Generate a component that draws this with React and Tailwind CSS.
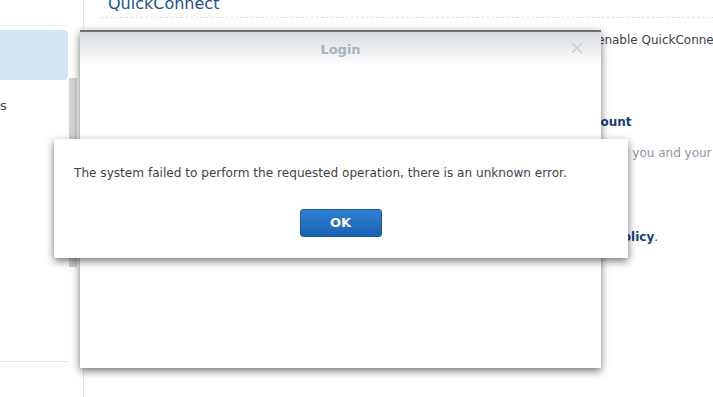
import React from "react";

export default function App() {
  const font = { fontFamily: '"DejaVu Sans", Verdana, sans-serif' };
  return (
    <div
      className="relative w-[713px] h-[397px] overflow-hidden bg-white flex text-[12px] text-[#404548]"
      style={font}
    >
      {/* sidebar */}
      <div className="w-[84px] shrink-0 flex border-r border-[#e6e6e6]">
        <div className="w-[69px] flex flex-col pt-[25px]">
          <div className="h-[1px] bg-[#ececec] w-[68px]" />
          <div className="mt-[4px] h-[50px] w-[68px] rounded-r-[4px] bg-[#d5e5f7]" />
          <div className="mt-[16px] h-[20px] leading-[20px] text-[13px] text-[#444]">s</div>
          <div className="flex-1" />
          <div className="h-[1px] bg-[#e4e4e4] w-[68px] mb-[35px]" />
        </div>
        <div className="w-[8px] flex flex-col pt-[78px]">
          <div className="h-[189px] bg-[#d3d3d3]" />
        </div>
      </div>

      {/* main */}
      <div className="flex-1 flex flex-col pl-[16px]">
        <div className="border-b border-dashed border-[#e3dde0] h-[18px] overflow-hidden">
          <div className="pl-[8px] mt-[-6px] text-[16px] leading-[20px] text-[#1d4f8a]">QuickConnect</div>
        </div>
        <div className="mt-[14px] pl-[497px] whitespace-nowrap leading-[16px] text-[#3a3f44]">
          enable QuickConnect
        </div>
        <div className="mt-[66px] pl-[477px] whitespace-nowrap leading-[16px] font-bold text-[#163f74]">
          Account
        </div>
        <div className="mt-[15px] pl-[512px] whitespace-nowrap leading-[16px] text-[#8b96a3]">
          for you and your
        </div>
        <div className="mt-[68px] pl-[514px] whitespace-nowrap leading-[16px] text-[#163f74]">
          <span className="font-bold">Policy</span>.
        </div>
      </div>

      {/* Login dialog */}
      <div className="absolute left-[80px] top-[30px] w-[521px] h-[338px] bg-white border-t-2 border-[#6b6f76] shadow-[0_3px_8px_rgba(0,0,0,0.55)] flex flex-col">
        <div className="h-[34px] bg-gradient-to-b from-[#d9dde2] to-white relative flex items-center justify-center">
          <span className="font-bold text-[13px] text-[#a9b1ba] mt-[1px]">Login</span>
          <svg className="absolute right-[18px] top-[10px]" width="12" height="12" viewBox="0 0 12 12">
            <path d="M1 1L11 11M11 1L1 11" stroke="#c4c9cf" strokeWidth="1.2" />
          </svg>
        </div>
      </div>

      {/* Error dialog */}
      <div className="absolute left-[54px] top-[139px] w-[574px] h-[119px] bg-white shadow-[0_3px_8px_rgba(0,0,0,0.55)] flex flex-col">
        <div className="pl-[20px] pt-[26px] leading-[16px] text-[12.1px] text-[#3d4348] whitespace-nowrap">
          The system failed to perform the requested operation, there is an unknown error.
        </div>
        <div className="flex justify-center pt-[28px]">
          <button className="w-[82px] h-[28px] ml-[-1px] rounded-[3px] border border-[#1c5a9e] bg-gradient-to-b from-[#2f80d1] to-[#1a62b4] text-white font-bold text-[13px] flex items-center justify-center">
            OK
          </button>
        </div>
      </div>
    </div>
  );
}
